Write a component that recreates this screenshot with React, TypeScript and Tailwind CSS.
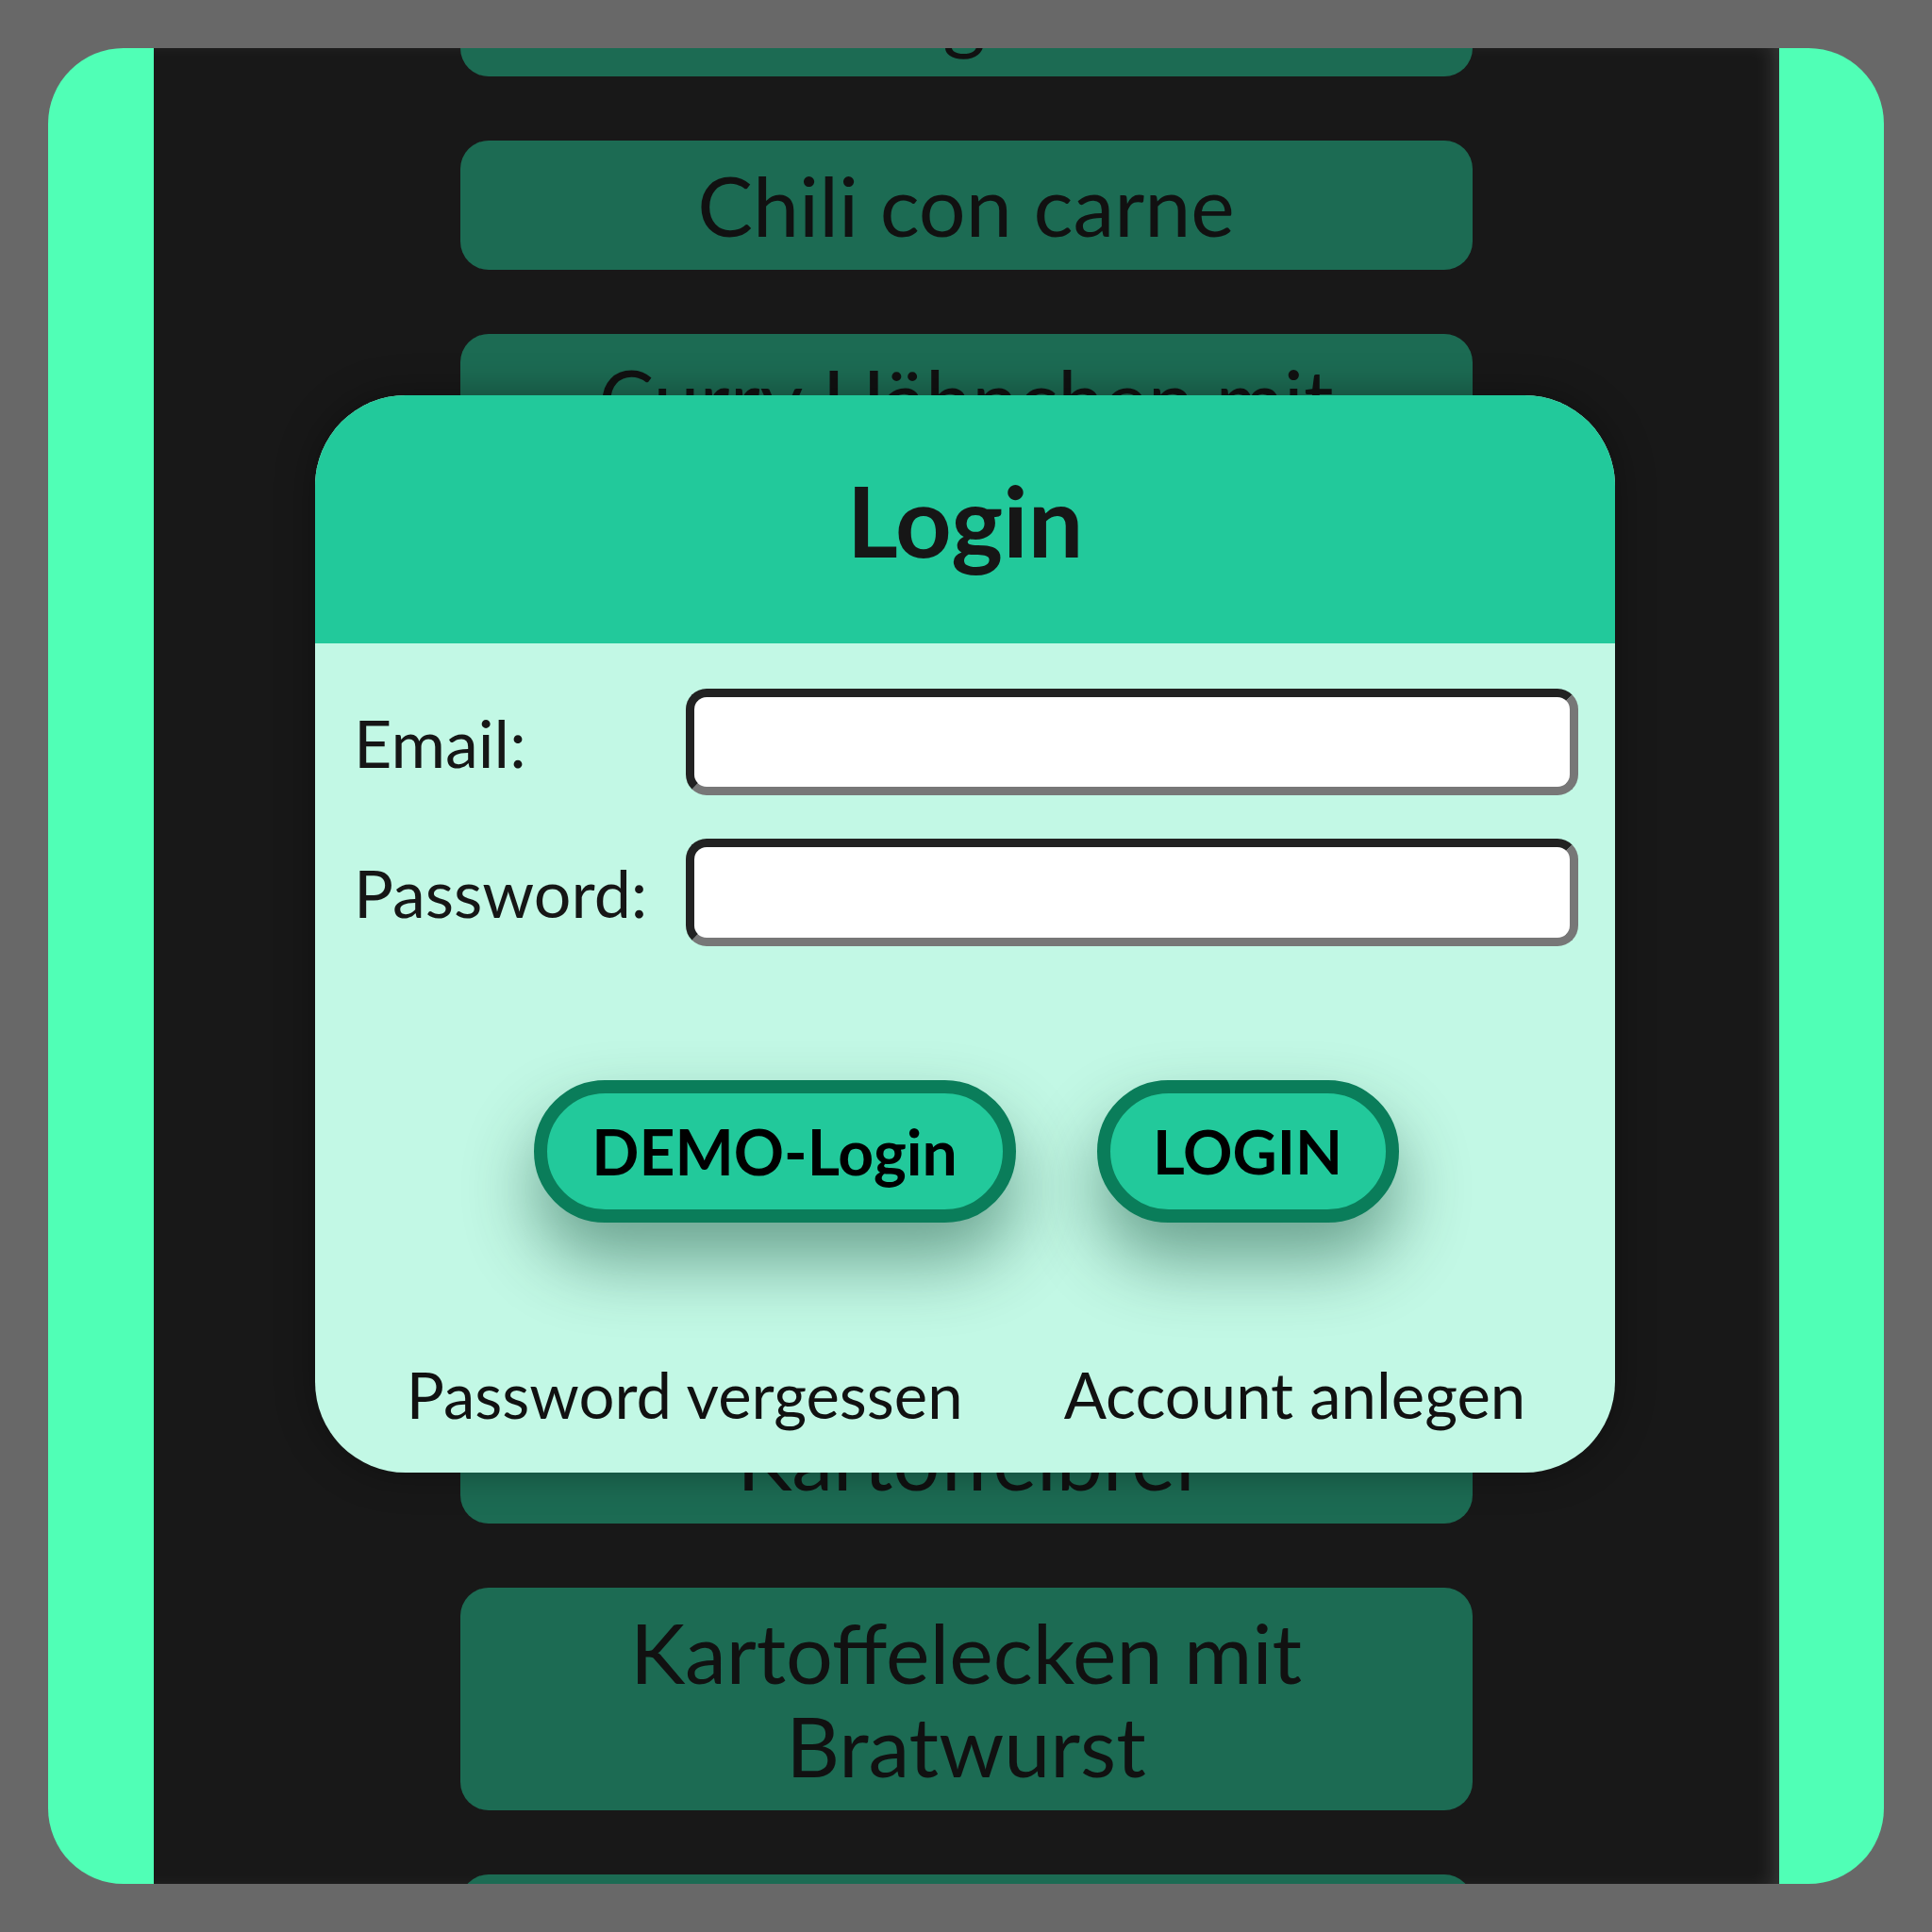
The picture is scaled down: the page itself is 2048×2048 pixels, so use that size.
import React from "react";

const items: { lines: string[] }[] = [
  { lines: ["Spaghetti", "Bolognese"] },
  { lines: ["Chili con carne"] },
  { lines: ["Curry Hähnchen mit", "Reis"] },
  { lines: ["Gulasch"] },
  { lines: ["Linsensuppe"] },
  { lines: ["Pfannkuchen"] },
  { lines: ["Schnitzel"] },
  { lines: ["Kartoffelbrei"] },
  { lines: ["Kartoffelecken mit", "Bratwurst"] },
  { lines: ["Gemüsepfanne"] },
];

export default function App() {
  return (
    <div
      className="w-[2048px] h-[2048px] bg-[#686868] flex items-center justify-center"
      style={{ fontFamily: "Lato, 'Noto Sans', sans-serif" }}
    >
      <div className="relative w-[1946px] h-[1946px] rounded-[80px] bg-[#50ffb6] overflow-hidden flex justify-center">
        <div className="w-[1723px] h-full bg-[#181818] overflow-hidden shadow-[inset_-14px_0_22px_-10px_rgba(255,255,255,0.16)]">
          <div className="flex flex-col items-center gap-[68px] mt-[-206px]">
            {items.map((it, i) => (
              <div
                key={i}
                className="w-[1073px] shrink-0 rounded-[30px] bg-[#1c6b53] py-[19px] text-center text-[#111111] text-[88px] leading-[99px]"
              >
                {it.lines.map((l, j) => (
                  <div key={j}>{l}</div>
                ))}
              </div>
            ))}
          </div>
        </div>

        {/* Login dialog */}
        <div className="absolute left-[283px] top-[368px] w-[1378px] h-[1142px] rounded-[96px] overflow-hidden flex flex-col bg-[#c2f8e5] shadow-[0_0_40px_rgba(0,0,0,0.35)]">
          <div className="h-[263px] shrink-0 bg-[#22c99b] flex items-center justify-center">
            <span className="text-[104px] font-bold text-[#161616] leading-none">Login</span>
          </div>
          <div className="flex-1 flex flex-col pl-[41px] pr-[39px] pt-[48px]">
            <div className="flex items-center h-[113px]">
              <label className="w-[352px] shrink-0 text-[70px] text-[#161616] leading-none">Email:</label>
              <div className="flex-1 h-full rounded-[22px] bg-white border-[9px] border-t-[#222222] border-l-[#222222] border-b-[#777777] border-r-[#777777]" />
            </div>
            <div className="flex items-center h-[114px] mt-[46px]">
              <label className="w-[352px] shrink-0 text-[70px] text-[#161616] leading-none">Password:</label>
              <div className="flex-1 h-full rounded-[22px] bg-white border-[9px] border-t-[#222222] border-l-[#222222] border-b-[#777777] border-r-[#777777]" />
            </div>
            <div className="flex justify-center gap-[86px] mt-[142px]">
              <button className="w-[511px] h-[151px] rounded-full bg-[#22c99b] border-[14px] border-[#0a7d5a] text-[66px] font-bold text-black leading-none shadow-[0_40px_75px_rgba(0,60,40,0.45)]">
                DEMO-Login
              </button>
              <button className="w-[320px] h-[151px] rounded-full bg-[#22c99b] border-[14px] border-[#0a7d5a] text-[65px] font-bold text-black leading-none shadow-[0_40px_75px_rgba(0,60,40,0.45)]">
                LOGIN
              </button>
            </div>
            <div className="flex justify-center gap-[107px] mt-[142px] text-[67px] leading-[80px] text-[#111111]">
              <span>Password vergessen</span>
              <span>Account anlegen</span>
            </div>
          </div>
        </div>
      </div>
    </div>
  );
}
